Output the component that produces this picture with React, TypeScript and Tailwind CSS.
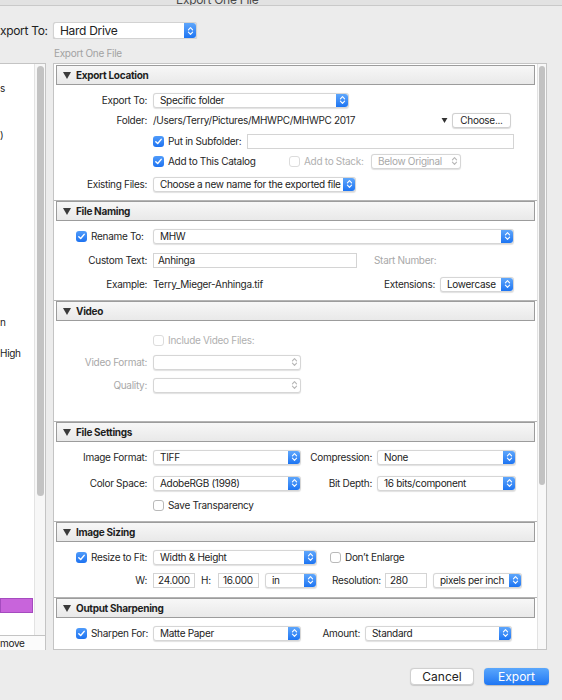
import type { ReactNode } from "react";

const font = { fontFamily: "Inter, 'Liberation Sans', sans-serif" };

function Stepper({ blue = true, disabled = false }: { blue?: boolean; disabled?: boolean }) {
  return (
    <span
      className={`flex h-full w-[12px] shrink-0 items-center justify-center rounded-r-[3px] ${
        blue && !disabled ? "bg-gradient-to-b from-[#5ea6fb] to-[#1b74f2]" : ""
      }`}
    >
      <svg viewBox="0 0 7 11" className="h-[10px] w-[7px]" aria-hidden>
        <path
          d="M1.2 4.2 L3.5 1.8 L5.8 4.2 M1.2 6.8 L3.5 9.2 L5.8 6.8"
          fill="none"
          stroke={blue && !disabled ? "#fff" : disabled ? "#b5b5b5" : "#555"}
          strokeWidth="1.2"
          strokeLinecap="round"
          strokeLinejoin="round"
        />
      </svg>
    </span>
  );
}

function Popup({
  w,
  text,
  disabled = false,
  blue = true,
}: {
  w: string;
  text?: string;
  disabled?: boolean;
  blue?: boolean;
}) {
  return (
    <div
      className={`flex h-[15px] shrink-0 items-center rounded-[3px] border border-[#d6d6d6] bg-white shadow-[0_0.5px_1px_rgba(0,0,0,0.12)] ${w}`}
    >
      <span className={`flex-1 overflow-hidden pl-[6px] ${disabled ? "text-[#a8a8a8]" : "text-[#222]"}`}>
        {text}
      </span>
      <Stepper blue={blue} disabled={disabled} />
    </div>
  );
}

function Field({ w, text = "" }: { w: string; text?: string }) {
  return (
    <div
      className={`flex h-[15px] shrink-0 items-center border border-[#d4d4d4] bg-white pl-[4px] text-[#222] ${w}`}
    >
      {text}
    </div>
  );
}

function Check({ checked = false, disabled = false }: { checked?: boolean; disabled?: boolean }) {
  if (checked)
    return (
      <span className="flex h-[11px] w-[11px] shrink-0 items-center justify-center rounded-[3px] bg-gradient-to-b from-[#4f9bfa] to-[#1d72f0]">
        <svg viewBox="0 0 10 10" className="h-[9px] w-[9px]" aria-hidden>
          <path d="M2 5.2 L4.1 7.3 L8 2.6" fill="none" stroke="#fff" strokeWidth="1.6" strokeLinecap="round" strokeLinejoin="round" />
        </svg>
      </span>
    );
  return (
    <span
      className={`h-[11px] w-[11px] shrink-0 rounded-[3px] border bg-white ${
        disabled ? "border-[#dcdcdc]" : "border-[#b9b9b9]"
      }`}
    />
  );
}

function Label({ children, grey = false }: { children: ReactNode; grey?: boolean }) {
  return (
    <div className={`w-[94px] shrink-0 pr-[1px] text-right ${grey ? "text-[#a8a8a8]" : ""}`}>{children}</div>
  );
}

function CheckLabel({ children }: { children: ReactNode }) {
  return (
    <div className="flex w-[94px] shrink-0 items-center gap-[4px] pl-[22px]">
      <Check checked />
      <span>{children}</span>
    </div>
  );
}

function Row({ mt, children }: { mt: string; children: ReactNode }) {
  return <div className={`flex h-[20px] items-center ${mt}`}>{children}</div>;
}

function Header({ title }: { title: string }) {
  return (
    <div className="mx-[2px] flex h-[20px] items-center border border-[#9c9c9c] bg-gradient-to-b from-[#f7f7f7] to-[#e9e9e9] pl-[6px]">
      <svg viewBox="0 0 8 7" className="mr-[5px] h-[7px] w-[8px]" aria-hidden>
        <path d="M0 0 H8 L4 7 Z" fill="#3b3b3b" />
      </svg>
      <span className="font-bold text-[#1e1e1e]">{title}</span>
    </div>
  );
}

function Section({ title, h, children }: { title: string; h: string; children: ReactNode }) {
  return (
    <div>
      <Header title={title} />
      <div className={`flex flex-col border-b border-[#b4b4b4] ${h}`}>{children}</div>
    </div>
  );
}

export default function App() {
  return (
    <div
      className="flex h-[700px] w-[562px] flex-col overflow-hidden whitespace-nowrap bg-[#ececec] text-[10px] tracking-[-0.3px] text-[#262626]"
      style={font}
    >
      {/* title bar, cut off */}
      <div className="h-[6px] overflow-hidden border-b border-[#c9c9c9] bg-[#e2e2e2]">
        <div className="-mt-[9px] pl-[176px] text-[12px] text-[#4a4a4a]">Export One File</div>
      </div>

      <div className="mt-[16px] flex h-[17px] items-center overflow-hidden">
        <div className="-ml-[7px] w-[53px] shrink-0 text-[12px] text-[#222]">Export To:</div>
        <div className="ml-[7px] flex h-[17px] w-[144px] shrink-0 items-center rounded-[3px] border border-[#d2d2d2] bg-white shadow-[0_0.5px_1px_rgba(0,0,0,0.15)]">
          <span className="flex-1 pl-[6px] text-[12px] text-[#222]">Hard Drive</span>
          <Stepper />
        </div>
      </div>

      <div className="mt-[7px] pl-[54px] text-[#a2a2a2]">Export One File</div>

      <div className="mt-[2px] flex h-[587px]">
        {/* left preset panel, cut off */}
        <div className="flex w-[46px] shrink-0 flex-col border-r border-t border-[#c4c4c4] bg-white">
          <div className="flex flex-1 overflow-hidden">
            <div className="flex-1 text-[#222]">
              <div className="mt-[17px]">s</div>
              <div className="mt-[32px]">)</div>
              <div className="mt-[172px]">n</div>
              <div className="mt-[16px]">High</div>
              <div className="mt-[237px] h-[15px] w-[33px] border border-[#a54bbf] bg-[#c864db]" />
            </div>
            <div className="w-[11px] shrink-0 border-l border-[#e3e3e3] bg-[#f7f7f7] pt-[2px]">
              <div className="mx-auto h-[430px] w-[7px] rounded-full bg-[#c3c3c3]" />
            </div>
          </div>
          <div className="flex h-[15px] items-center border-t border-[#c4c4c4] bg-[#fbfbfb] text-[#222]">move</div>
        </div>

        {/* main settings panel */}
        <div className="ml-[7px] flex h-[587px] w-[494px] shrink-0 overflow-hidden border border-[#c4c4c4] bg-white">
          <div className="w-[483px] shrink-0 pt-[1px]">
            <Section title="Export Location" h="h-[116px]">
              <Row mt="mt-[5px]">
                <Label>Export To:</Label>
                <Popup w="ml-[5px] w-[196px]" text="Specific folder" />
              </Row>
              <Row mt="mt-0">
                <Label>Folder:</Label>
                <span className="ml-[5px] w-[288px] shrink-0">/Users/Terry/Pictures/MHWPC/MHWPC 2017</span>
                <svg viewBox="0 0 7 6" className="h-[5px] w-[7px]" aria-hidden>
                  <path d="M0 0 H7 L3.5 6 Z" fill="#333" />
                </svg>
                <div className="ml-[4px] flex h-[15px] w-[59px] items-center justify-center rounded-[3px] border border-[#d0d0d0] bg-white shadow-[0_0.5px_1px_rgba(0,0,0,0.15)]">
                  Choose...
                </div>
              </Row>
              <Row mt="mt-[1px]">
                <div className="w-[94px] shrink-0" />
                <div className="ml-[5px] flex w-[94px] shrink-0 items-center gap-[4px]">
                  <Check checked />
                  <span>Put in Subfolder:</span>
                </div>
                <Field w="w-[267px]" />
              </Row>
              <Row mt="mt-0">
                <div className="w-[94px] shrink-0" />
                <div className="ml-[5px] flex w-[136px] shrink-0 items-center gap-[4px]">
                  <Check checked />
                  <span>Add to This Catalog</span>
                </div>
                <Check disabled />
                <span className="ml-[4px] w-[67px] shrink-0 text-[#b0b0b0]">Add to Stack:</span>
                <Popup w="w-[90px]" text="Below Original" disabled blue={false} />
              </Row>
              <Row mt="mt-[3px]">
                <Label>Existing Files:</Label>
                <Popup w="ml-[5px] w-[203px]" text="Choose a new name for the exported file" />
              </Row>
            </Section>

            <Section title="File Naming" h="h-[80px]">
              <Row mt="mt-[5px]">
                <CheckLabel>Rename To:</CheckLabel>
                <Popup w="ml-[5px] w-[361px]" text="MHW" />
              </Row>
              <Row mt="mt-[4px]">
                <Label>Custom Text:</Label>
                <Field w="ml-[5px] w-[204px]" text="Anhinga" />
                <span className="ml-[17px] text-[#a8a8a8]">Start Number:</span>
              </Row>
              <Row mt="mt-[4px]">
                <Label>Example:</Label>
                <span className="ml-[5px] w-[228px] shrink-0">Terry_Mieger-Anhinga.tif</span>
                <span className="w-[54px] shrink-0 text-right">Extensions:</span>
                <Popup w="ml-[5px] w-[74px]" text="Lowercase" />
              </Row>
            </Section>

            <Section title="Video" h="h-[101px]">
              <Row mt="mt-[9px]">
                <div className="w-[94px] shrink-0" />
                <div className="ml-[5px] flex items-center gap-[4px] text-[#b0b0b0]">
                  <Check disabled />
                  <span>Include Video Files:</span>
                </div>
              </Row>
              <Row mt="mt-[2px]">
                <Label grey>Video Format:</Label>
                <Popup w="ml-[5px] w-[148px]" disabled blue={false} />
              </Row>
              <Row mt="mt-[3px]">
                <Label grey>Quality:</Label>
                <Popup w="ml-[5px] w-[148px]" disabled blue={false} />
              </Row>
            </Section>

            <Section title="File Settings" h="h-[80px]">
              <Row mt="mt-[5px]">
                <Label>Image Format:</Label>
                <Popup w="ml-[5px] w-[148px]" text="TIFF" />
                <span className="w-[71px] shrink-0 text-right">Compression:</span>
                <Popup w="ml-[5px] w-[139px]" text="None" />
              </Row>
              <Row mt="mt-[6px]">
                <Label>Color Space:</Label>
                <Popup w="ml-[5px] w-[148px]" text="AdobeRGB (1998)" />
                <span className="w-[71px] shrink-0 text-right">Bit Depth:</span>
                <Popup w="ml-[5px] w-[139px]" text="16 bits/component" />
              </Row>
              <Row mt="mt-[2px]">
                <div className="w-[94px] shrink-0" />
                <div className="ml-[5px] flex items-center gap-[4px]">
                  <Check />
                  <span>Save Transparency</span>
                </div>
              </Row>
            </Section>

            <Section title="Image Sizing" h="h-[56px]">
              <Row mt="mt-[5px]">
                <CheckLabel>Resize to Fit:</CheckLabel>
                <Popup w="ml-[5px] w-[164px]" text="Width & Height" />
                <div className="ml-[13px] flex items-center gap-[4px]">
                  <Check />
                  <span>Don’t Enlarge</span>
                </div>
              </Row>
              <Row mt="mt-[3px]">
                <Label>W:</Label>
                <Field w="ml-[5px] w-[42px]" text="24.000" />
                <span className="ml-[6px] w-[17px] shrink-0">H:</span>
                <Field w="w-[41px]" text="16.000" />
                <Popup w="ml-[6px] w-[52px]" text="in" />
                <span className="ml-[15px] w-[48px] shrink-0">Resolution:</span>
                <Field w="ml-[5px] w-[42px]" text="280" />
                <Popup w="ml-[6px] w-[89px]" text="pixels per inch" />
              </Row>
            </Section>

            <Section title="Output Sharpening" h="h-[40px]">
              <Row mt="mt-[5px]">
                <CheckLabel>Sharpen For:</CheckLabel>
                <Popup w="ml-[5px] w-[148px]" text="Matte Paper" />
                <span className="w-[59px] shrink-0 text-right">Amount:</span>
                <Popup w="ml-[5px] w-[147px]" text="Standard" />
              </Row>
            </Section>
          </div>
          {/* scrollbar */}
          <div className="flex-1 border-l border-[#e2e2e2] bg-[#f8f8f8] pt-[2px]">
            <div className="mx-auto h-[419px] w-[6px] rounded-full bg-[#c2c2c2]" />
          </div>
        </div>
      </div>

      <div className="mt-[18px] flex justify-end gap-[10px] pr-[13px] text-[12px] tracking-normal">
        <div className="flex h-[17px] w-[64px] items-center justify-center rounded-[4px] border border-[#d0d0d0] bg-white text-[#222] shadow-[0_0.5px_1px_rgba(0,0,0,0.15)]">
          Cancel
        </div>
        <div className="flex h-[17px] w-[65px] items-center justify-center rounded-[4px] bg-gradient-to-b from-[#5aa7fc] to-[#1e76f3] text-white shadow-[0_0.5px_1px_rgba(0,0,0,0.2)]">
          Export
        </div>
      </div>
    </div>
  );
}
